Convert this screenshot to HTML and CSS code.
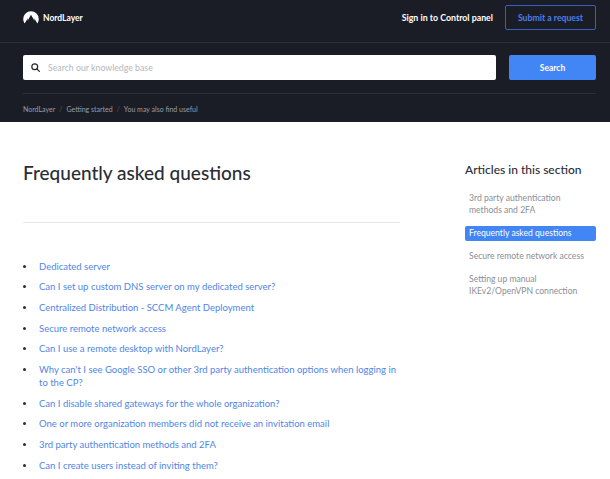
FILE: index.html
```html
<!DOCTYPE html>
<html lang="en">
<head>
<meta charset="utf-8">
<title>Frequently asked questions</title>
<link rel="stylesheet" href="styles.css">
</head>
<body>
<div class="dark">
  <header class="topbar">
    <a class="logo">
      <svg class="logo-icon" viewBox="0 0 16 13" width="16" height="13"><path d="M1.6 12.6A7.6 7.6 0 0 1 0.2 8 7.8 7.8 0 0 1 8 0.2 7.8 7.8 0 0 1 15.8 8a7.6 7.6 0 0 1-1.4 4.6L11.2 7.2l.3 2.6L8 3.8 4.6 9.8l.3-2.6z" fill="#fff"/></svg>
      <span class="logo-text">NordLayer</span>
    </a>
    <nav class="topnav">
      <a class="signin">Sign in to Control panel</a>
      <a class="submit">Submit a request</a>
    </nav>
  </header>
  <div class="searchwrap">
    <div class="searchrow">
      <div class="searchbox">
        <svg class="search-icon" viewBox="0 0 12 12" width="9" height="9"><circle cx="5" cy="5" r="3.9" fill="none" stroke="#23262f" stroke-width="1.6"/><path d="M8 8l3.2 3.2" stroke="#23262f" stroke-width="1.6" stroke-linecap="round"/></svg>
        <span class="placeholder">Search our knowledge base</span>
      </div>
      <button class="searchbtn">Search</button>
    </div>
    <div class="crumbs">
      <a>NordLayer</a><span class="sep">/</span><a>Getting started</a><span class="sep">/</span><a>You may also find useful</a>
    </div>
  </div>
</div>
<main class="content">
  <article class="article">
    <h1 class="title">Frequently asked questions</h1>
    <hr class="rule">
    <ul class="faq">
      <li><a>Dedicated server</a></li>
      <li><a>Can I set up custom DNS server on my dedicated server?</a></li>
      <li><a>Centralized Distribution - SCCM Agent Deployment</a></li>
      <li><a>Secure remote network access</a></li>
      <li><a>Can I use a remote desktop with NordLayer?</a></li>
      <li><a>Why can't I see Google SSO or other 3rd party authentication options when logging in to the CP?</a></li>
      <li><a>Can I disable shared gateways for the whole organization?</a></li>
      <li><a>One or more organization members did not receive an invitation email</a></li>
      <li><a>3rd party authentication methods and 2FA</a></li>
      <li><a>Can I create users instead of inviting them?</a></li>
    </ul>
  </article>
  <aside class="side">
    <h2 class="side-title">Articles in this section</h2>
    <ul class="side-list">
      <li>3rd party authentication methods and 2FA</li>
      <li class="active">Frequently asked questions</li>
      <li>Secure remote network access</li>
      <li>Setting up manual IKEv2/OpenVPN connection</li>
    </ul>
  </aside>
</main>
</body>
</html>
```
FILE: styles.css
```css
* { box-sizing: border-box; }
html, body { margin: 0; padding: 0; }
body { width: 610px; height: 479px; overflow: hidden; background: #fff; font-family: "Lato", "Liberation Sans", sans-serif; color: #2a2d36; }
.dark { background: #1b1d26; height: 122px; }
.topbar { height: 43px; border-bottom: 1px solid #2c2e37; display: flex; align-items: flex-start; justify-content: space-between; padding: 5px 14px 0 23px; }
.logo { display: flex; align-items: center; gap: 4px; margin-top: 6px; }
.logo-icon { display: block; }
.logo-text { color: #fff; font-size: 8.5px; font-weight: 700; }
.topnav { display: flex; align-items: center; gap: 12px; }
.signin { color: #fff; font-size: 8.8px; font-weight: 700; }
.submit { width: 91px; height: 25px; border: 1px solid #3461bd; border-radius: 2px; color: #4a7fea; font-size: 8.7px; font-weight: 700; display: flex; align-items: center; justify-content: center; }
.searchwrap { padding: 12px 14px 0 23px; }
.searchrow { display: flex; gap: 13px; padding-bottom: 13px; border-bottom: 1px solid #2c2e37; }
.searchbox { flex: 1; height: 25px; background: #fff; border-radius: 2px; display: flex; align-items: center; padding-left: 8px; gap: 8px; }
.search-icon { display: block; }
.placeholder { color: #b5b8be; font-size: 8.75px; }
.searchbtn { width: 87px; height: 25px; background: #4285f4; border: 0; border-radius: 2px; color: #fff; font-family: inherit; font-size: 8.5px; font-weight: 700; }
.crumbs { padding-top: 11px; font-size: 7px; color: #9a9da5; display: flex; }
.sep { margin: 0 4px; color: #55575f; }
.content { display: flex; padding: 0 14px 0 23px; justify-content: space-between; }
.article { width: 377px; }
.title { margin: 38px 0 36px; font-size: 19px; line-height: 26px; font-weight: 500; color: #2a2d36; }
.rule { margin: 0; border: 0; border-top: 1px solid #e6e7e9; }
.faq { list-style: none; margin: 36.5px 0 0; padding: 0 0 0 16px; }
.faq li { position: relative; font-size: 9.5px; line-height: 13px; margin-bottom: 7.7px; color: #4f86e6; }
.faq li::before { content: ""; position: absolute; left: -16px; top: 5px; width: 3px; height: 3px; border-radius: 50%; background: #2a2d36; }
.side { width: 131px; padding-top: 40px; }
.side-title { margin: 0 0 12.5px; font-size: 12px; line-height: 16px; font-weight: 500; color: #2a2d36; }
.side-list { list-style: none; margin: 0; padding: 0; }
.side-list li { padding: 1.5px 4px; font-size: 8.6px; line-height: 12px; color: #8b8e96; margin-bottom: 8px; }
.side-list li.active { background: #4285f4; color: #fff; border-radius: 2px; }
```
